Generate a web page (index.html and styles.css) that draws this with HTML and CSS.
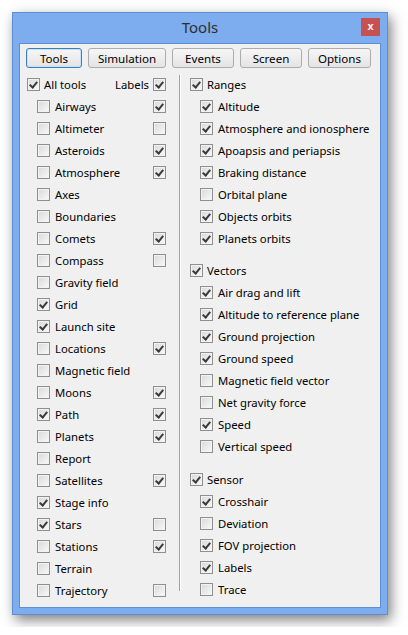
FILE: index.html
```html
<!DOCTYPE html>
<html lang="en">
<head>
    <meta charset="UTF-8">
    <title>Tools</title>
    <link rel="stylesheet" href="styles.css">
</head>
<body>

<div class="window">
    <div class="titlebar">
        <span></span>
        <span class="title">Tools</span>
        <span class="close">x</span>
    </div>

    <div class="client">
        <div class="tabs">
            <button class="tab active" style="width:56px">Tools</button>
            <button class="tab" style="width:78px">Simulation</button>
            <button class="tab" style="width:62px">Events</button>
            <button class="tab" style="width:62px">Screen</button>
            <button class="tab" style="width:63px">Options</button>
        </div>

        <div class="panes">
            <div class="pane left">
                <div class="row"><span class="cb on"></span><span class="text">All tools</span><span class="extra">Labels<span class="cb on"></span></span></div>
                <div class="row sub"><span class="cb"></span><span class="text">Airways</span><span class="cb on lab"></span></div>
                <div class="row sub"><span class="cb"></span><span class="text">Altimeter</span><span class="cb lab"></span></div>
                <div class="row sub"><span class="cb"></span><span class="text">Asteroids</span><span class="cb on lab"></span></div>
                <div class="row sub"><span class="cb"></span><span class="text">Atmosphere</span><span class="cb on lab"></span></div>
                <div class="row sub"><span class="cb"></span><span class="text">Axes</span></div>
                <div class="row sub"><span class="cb"></span><span class="text">Boundaries</span></div>
                <div class="row sub"><span class="cb"></span><span class="text">Comets</span><span class="cb on lab"></span></div>
                <div class="row sub"><span class="cb"></span><span class="text">Compass</span><span class="cb lab"></span></div>
                <div class="row sub"><span class="cb"></span><span class="text">Gravity field</span></div>
                <div class="row sub"><span class="cb on"></span><span class="text">Grid</span></div>
                <div class="row sub"><span class="cb on"></span><span class="text">Launch site</span></div>
                <div class="row sub"><span class="cb"></span><span class="text">Locations</span><span class="cb on lab"></span></div>
                <div class="row sub"><span class="cb"></span><span class="text">Magnetic field</span></div>
                <div class="row sub"><span class="cb"></span><span class="text">Moons</span><span class="cb on lab"></span></div>
                <div class="row sub"><span class="cb on"></span><span class="text">Path</span><span class="cb on lab"></span></div>
                <div class="row sub"><span class="cb"></span><span class="text">Planets</span><span class="cb on lab"></span></div>
                <div class="row sub"><span class="cb"></span><span class="text">Report</span></div>
                <div class="row sub"><span class="cb"></span><span class="text">Satellites</span><span class="cb on lab"></span></div>
                <div class="row sub"><span class="cb on"></span><span class="text">Stage info</span></div>
                <div class="row sub"><span class="cb on"></span><span class="text">Stars</span><span class="cb lab"></span></div>
                <div class="row sub"><span class="cb"></span><span class="text">Stations</span><span class="cb on lab"></span></div>
                <div class="row sub"><span class="cb"></span><span class="text">Terrain</span></div>
                <div class="row sub"><span class="cb"></span><span class="text">Trajectory</span><span class="cb lab"></span></div>
            </div>

            <div class="divider"></div>

            <div class="pane right">
                <div class="group">
                    <div class="row"><span class="cb on"></span><span class="text">Ranges</span></div>
                    <div class="row sub"><span class="cb on"></span><span class="text">Altitude</span></div>
                    <div class="row sub"><span class="cb on"></span><span class="text">Atmosphere and ionosphere</span></div>
                    <div class="row sub"><span class="cb on"></span><span class="text">Apoapsis and periapsis</span></div>
                    <div class="row sub"><span class="cb on"></span><span class="text">Braking distance</span></div>
                    <div class="row sub"><span class="cb"></span><span class="text">Orbital plane</span></div>
                    <div class="row sub"><span class="cb on"></span><span class="text">Objects orbits</span></div>
                    <div class="row sub"><span class="cb on"></span><span class="text">Planets orbits</span></div>
                </div>
                <div class="group">
                    <div class="row"><span class="cb on"></span><span class="text">Vectors</span></div>
                    <div class="row sub"><span class="cb on"></span><span class="text">Air drag and lift</span></div>
                    <div class="row sub"><span class="cb on"></span><span class="text">Altitude to reference plane</span></div>
                    <div class="row sub"><span class="cb on"></span><span class="text">Ground projection</span></div>
                    <div class="row sub"><span class="cb on"></span><span class="text">Ground speed</span></div>
                    <div class="row sub"><span class="cb"></span><span class="text">Magnetic field vector</span></div>
                    <div class="row sub"><span class="cb"></span><span class="text">Net gravity force</span></div>
                    <div class="row sub"><span class="cb on"></span><span class="text">Speed</span></div>
                    <div class="row sub"><span class="cb"></span><span class="text">Vertical speed</span></div>
                </div>
                <div class="group last">
                    <div class="row"><span class="cb on"></span><span class="text">Sensor</span></div>
                    <div class="row sub"><span class="cb on"></span><span class="text">Crosshair</span></div>
                    <div class="row sub"><span class="cb"></span><span class="text">Deviation</span></div>
                    <div class="row sub"><span class="cb on"></span><span class="text">FOV projection</span></div>
                    <div class="row sub"><span class="cb on"></span><span class="text">Labels</span></div>
                    <div class="row sub"><span class="cb"></span><span class="text">Trace</span></div>
                </div>
            </div>
        </div>
    </div>
</div>

</body>
</html>
```

FILE: styles.css
```css
body {
    margin: 0;
    padding: 12px;
    background-color: #fff;
    font-family: "Noto Sans", "Open Sans", sans-serif;
    font-size: 11.3px;
    color: #000;
}
.window {
    width: 376px;
    height: 603px;
    box-sizing: border-box;
    padding: 0 6px 6px;
    background-color: #7eadef;
    border: 1px solid #5d8ed4;
    box-shadow: 3px 5px 12px rgba(0, 0, 0, 0.5);
}
.titlebar {
    height: 30px;
    display: grid;
    grid-template-columns: 1fr auto 1fr;
}
.title {
    font-size: 15px;
    line-height: 28px;
    color: #2d2d2d;
}
.close {
    justify-self: end;
    margin: 5px 1px 0 0;
    width: 19px;
    height: 18px;
    background-color: #c75050;
    color: #fff;
    font-family: "Liberation Sans", sans-serif;
    font-weight: bold;
    font-size: 11px;
    line-height: 17px;
    text-align: center;
}
.client {
    height: 565px;
    box-sizing: border-box;
    background-color: #f0f0f0;
    border: 1px solid #5f8fd3;
}
.tabs {
    display: flex;
    gap: 6px;
    padding: 4px 0 0 6px;
}
.tab {
    height: 20px;
    padding: 0;
    font-family: inherit;
    font-size: 11.6px;
    color: #000;
    background: linear-gradient(#f6f6f6, #e4e4e4);
    border: 1px solid #acacac;
    border-radius: 3px;
    line-height: 17px;
}
.tab.active {
    border-color: #3c7fb1;
    box-shadow: inset 0 0 0 1px #c4e3f8;
}
.panes {
    display: flex;
    margin-top: 5px;
}
.pane.left {
    width: 159px;
    box-sizing: border-box;
    padding: 0 13px 0 7px;
}
.pane.right {
    padding-left: 9px;
}
.divider {
    width: 0;
    margin: 2px 0 10px;
    border-left: 1px solid #a0a0a0;
    border-right: 1px solid #fff;
}
.group + .group {
    margin-top: 10px;
}
.group.last {
    margin-top: 11px;
}
.row {
    height: 22px;
    display: flex;
    align-items: center;
    white-space: nowrap;
}
.row.sub {
    padding-left: 10px;
}
.text {
    margin-left: 4px;
}
.row.sub .text {
    margin-left: 5px;
}
.extra {
    margin-left: auto;
    display: flex;
    align-items: center;
    gap: 4px;
}
.cb.lab {
    margin-left: auto;
}
.cb {
    flex: none;
    position: relative;
    width: 13px;
    height: 13px;
    box-sizing: border-box;
    border: 1px solid #8e8f8f;
    background: linear-gradient(135deg, #d9d9d9, #f9f9f9);
    box-shadow: inset 0 0 0 1px #f2f2f2;
}
.cb.on::after {
    content: "";
    position: absolute;
    left: 3px;
    top: 1px;
    width: 3px;
    height: 6px;
    border: solid #3a3a3a;
    border-width: 0 2px 2px 0;
    transform: rotate(40deg);
}
```
